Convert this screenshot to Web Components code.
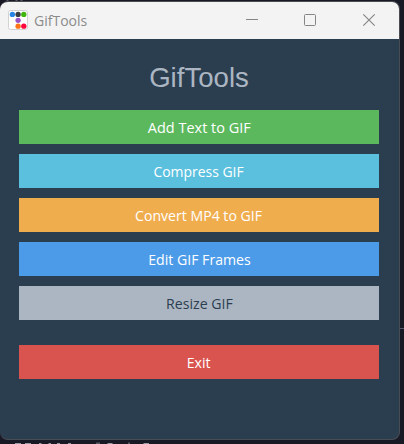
<!DOCTYPE html>
<html lang="en"><head><meta charset="utf-8"><title>GifTools</title>
<style>html,body{margin:0;height:100%;overflow:hidden;background:#191926}</style></head><body>
<gif-desktop></gif-desktop>
<script>
const define=(name,html)=>customElements.define(name,class extends HTMLElement{
  constructor(){super();this.attachShadow({mode:'open'}).innerHTML=html;}
});
define('window-icon',`<style>:host{display:block;width:20px;height:20px;margin-bottom:1px}svg{display:block}</style>
<svg width="20" height="20"><rect x=".5" y=".5" width="19" height="19" rx="2" fill="#fff" stroke="#d2d2d2"/>
<circle cx="4.4" cy="4.4" r="2.65" fill="#2985e5"/><circle cx="10.1" cy="4.4" r="2.65" fill="#383d41"/><circle cx="15.8" cy="4.4" r="2.65" fill="#40b50c"/>
<circle cx="10.1" cy="10.3" r="2.65" fill="#9854c4"/><circle cx="10.1" cy="16.2" r="2.65" fill="#ff7417"/><circle cx="15.8" cy="16.2" r="2.65" fill="#ff063c"/></svg>`);
define('window-controls',`<style>:host{display:block;width:130px;height:14px;margin-bottom:1px}svg{display:block}</style>
<svg width="130" height="14" fill="none" stroke="#858585"><path d="M0 6.5H12"/><rect x="58.5" y="1.5" width="11" height="11" rx="1"/><path d="M117.3 1.3L128.7 12.7M128.7 1.3L117.3 12.7" stroke-width="1.15"/></svg>`);
define('title-bar',`<style>:host{display:flex;align-items:center;height:37px;background:#f3f3f3;box-sizing:border-box;padding:0 23px 0 8px}
span{font:15px/20px "Open Sans",sans-serif;color:#8b8b8b;margin:0 0 2px 6px;flex:1;transform:scaleX(.935);transform-origin:0 50%}</style>
<window-icon></window-icon><span><slot></slot></span><window-controls></window-controls>`);
define('tool-button',`<style>:host{display:flex;align-items:center;justify-content:center;height:34px;background:var(--fill);color:var(--ink,#fff);font:15px/20px "Open Sans",sans-serif}
span{white-space:nowrap;transform:scaleX(var(--fit,.94))}</style><span><slot></slot></span>`);
define('tool-window',`<style>:host{display:flex;flex-direction:column;box-sizing:border-box;width:400px;height:439px;border:1px solid #4b4c52;border-left:0;border-radius:8px;overflow:hidden;background:#2b3e50}
main{display:flex;flex-direction:column;gap:10px;padding:22px 20px 0 19px}
h1{margin:0 0 1px;height:38px;box-sizing:border-box;font:400 27.6px/34px "Liberation Sans",sans-serif;color:#abb6c2;text-align:center}
.exit{margin-top:15px}</style>
<title-bar>GifTools</title-bar><main><h1>GifTools</h1>
<tool-button style="--fill:#5cb85c;--fit:.965">Add Text to GIF</tool-button>
<tool-button style="--fill:#5bc0de;--fit:.93">Compress GIF</tool-button>
<tool-button style="--fill:#f0ad4e">Convert MP4 to GIF</tool-button>
<tool-button style="--fill:#4c9be8;--fit:.94">Edit GIF Frames</tool-button>
<tool-button style="--fill:#abb6c2;--ink:#2b3e50">Resize GIF</tool-button>
<tool-button class="exit" style="--fill:#d9534f">Exit</tool-button></main>`);
define('gif-desktop',`<style>:host{display:block;position:relative;box-sizing:border-box;width:404px;height:444px;padding-top:1px;overflow:hidden;background:linear-gradient(#55566a,#55566a) 399px 328px/5px 1px no-repeat,#191926}
svg{position:absolute;inset:0;pointer-events:none}</style><tool-window></tool-window>
<svg width="404" height="444"><g stroke="#9899a6" fill="none"><path d="M15 443.5h6M25 443.5h6M39 443.5h2.5M48.500 443.5h2.500M57 443.5h3M68 443.5h3M97 442.500v1.500M99 442.500v1.500M107.500 443.5h5M129 442.500v1.500M143.500 443.5h5.500"/><path opacity=".5" d="M6.500 .5h2M15.500 .5h2M20.500 .5h2"/></g></svg>`);
</script></body></html>
